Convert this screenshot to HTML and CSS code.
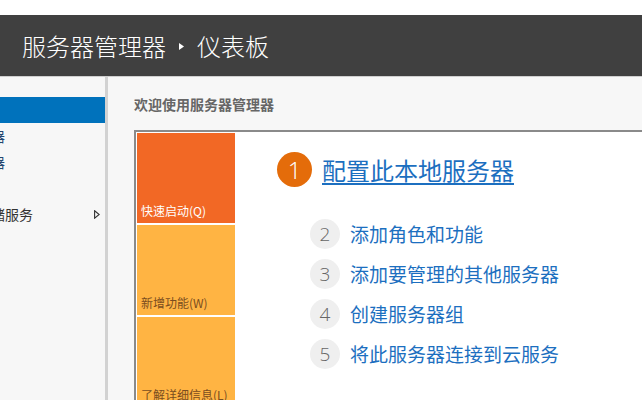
FILE: index.html
```html
<!DOCTYPE html>
<html lang="zh-CN">
<head>
<meta charset="utf-8">
<title>服务器管理器 - 仪表板</title>
<link rel="stylesheet" href="styles.css">
</head>
<body>
<div class="topgap"></div>
<header class="header">
  <span class="crumb">服务器管理器</span>
  <svg class="crumb-arrow" width="5" height="7" viewBox="0 0 5 7"><polygon points="0,0 5,3.5 0,7" fill="#ffffff"/></svg>
  <span class="crumb">仪表板</span>
</header>
<div class="main">
  <nav class="sidebar">
    <div class="nav-item selected"><span class="nav-text">仪表板</span></div>
    <div class="nav-item blueish"><span class="nav-text">本地服务器</span></div>
    <div class="nav-item blueish"><span class="nav-text">所有服务器</span></div>
    <div class="nav-item"><span class="nav-text">IIS</span></div>
    <div class="nav-item"><span class="nav-text">文件和存储服务</span>
      <svg class="nav-arrow" width="6" height="9" viewBox="0 0 6 9"><polygon points="0.6,0.8 5.2,4.5 0.6,8.2" fill="none" stroke="#333" stroke-width="1.1"/></svg>
    </div>
  </nav>
  <div class="divider"></div>
  <section class="content">
    <h1 class="welcome">欢迎使用服务器管理器</h1>
    <div class="panel">
      <div class="tiles">
        <div class="tile tile-quick">快速启动(Q)</div>
        <div class="tile tile-new">新增功能(W)</div>
        <div class="tile tile-learn">了解详细信息(L)</div>
      </div>
      <div class="steps">
        <div class="step-main">
          <span class="num-big">1</span>
          <a class="link-main" href="#">配置此本地服务器</a>
        </div>
        <ul class="step-list">
          <li class="step"><span class="num">2</span><span class="step-text">添加角色和功能</span></li>
          <li class="step"><span class="num">3</span><span class="step-text">添加要管理的其他服务器</span></li>
          <li class="step"><span class="num">4</span><span class="step-text">创建服务器组</span></li>
          <li class="step"><span class="num">5</span><span class="step-text">将此服务器连接到云服务</span></li>
        </ul>
      </div>
    </div>
  </section>
</div>
</body>
</html>
```
FILE: styles.css
```css
html, body {
  margin: 0;
  padding: 0;
}
body {
  width: 642px;
  height: 400px;
  overflow: hidden;
  background: #ffffff;
  font-family: "Noto Sans CJK SC", "Noto Sans", sans-serif;
}
.topgap {
  height: 15px;
  background: #ffffff;
}
.header {
  height: 62px;
  background: #404040;
  display: flex;
  align-items: center;
  padding-left: 22px;
  box-sizing: border-box;
  border-bottom: 1px solid #cfcfcf;
}
.crumb {
  color: #ffffff;
  font-size: 24px;
  line-height: 30px;
  font-weight: 300;
}
.crumb-arrow {
  margin: 0 13px 0 13px;
  position: relative;
  top: 1px;
}
.main {
  display: flex;
  height: 323px;
  background: #f7f7f7;
}
.sidebar {
  width: 105px;
  flex: none;
  overflow: hidden;
  padding-top: 20px;
  background: #f7f7f7;
}
.nav-item {
  height: 26px;
  display: flex;
  align-items: center;
  font-size: 14px;
  color: #333333;
  white-space: nowrap;
}
.nav-item.selected {
  background: #0072bc;
  color: #ffffff;
}
.nav-item.blueish {
  color: #24466f;
}
.nav-text {
  margin-left: -65px;
  flex: 1;
}
.nav-arrow {
  flex: none;
  margin-right: 5px;
}
.divider {
  width: 3px;
  flex: none;
  background: #d2d2d2;
}
.content {
  flex: 1;
  overflow: hidden;
  padding: 19px 0 0 26px;
  background: #f7f7f7;
}
.welcome {
  margin: 0;
  font-size: 14px;
  line-height: 16px;
  font-weight: 700;
  color: #666666;
  height: 34px;
}
.panel {
  width: 600px;
  height: 300px;
  background: #ffffff;
  border-top: 2px solid #8a8a8a;
  border-left: 2px solid #8a8a8a;
  display: flex;
  padding: 1px 0 0 1px;
  box-sizing: border-box;
}
.tiles {
  width: 98px;
  flex: none;
  display: flex;
  flex-direction: column;
  gap: 2px;
}
.tile {
  height: 90px;
  flex: none;
  box-sizing: border-box;
  display: flex;
  align-items: flex-end;
  padding: 0 0 5px 4px;
  font-size: 12px;
  line-height: 14px;
}
.tile-quick {
  background: #f26825;
  color: #ffffff;
}
.tile-new {
  background: #ffb443;
  color: #7a4d1f;
}
.tile-learn {
  background: #ffb443;
  color: #7a4d1f;
}
.steps {
  flex: 1;
  padding: 19px 0 0 42px;
}
.step-main {
  display: flex;
  align-items: center;
  gap: 10px;
  height: 35px;
}
.num-big {
  width: 35px;
  height: 35px;
  border-radius: 50%;
  background: #e46c0a;
  color: #ffffff;
  display: flex;
  align-items: center;
  justify-content: center;
  font-family: "Open Sans", "Noto Sans", sans-serif;
  font-size: 24px;
  font-weight: 300;
}
.link-main {
  font-size: 24px;
  line-height: 30px;
  color: #1c6fc0;
  text-decoration: underline;
  text-underline-offset: 3px;
}
.step-list {
  list-style: none;
  margin: 32px 0 0 33px;
  padding: 0;
  display: flex;
  flex-direction: column;
  gap: 10px;
}
.step {
  display: flex;
  align-items: center;
  gap: 10px;
  height: 30px;
}
.num {
  width: 30px;
  height: 30px;
  border-radius: 50%;
  background: #efefef;
  color: #666666;
  display: flex;
  align-items: center;
  justify-content: center;
  font-family: "Open Sans", "Noto Sans", sans-serif;
  font-size: 19px;
  font-weight: 300;
}
.step-text {
  font-size: 19px;
  line-height: 24px;
  color: #1c6fc0;
}
```
